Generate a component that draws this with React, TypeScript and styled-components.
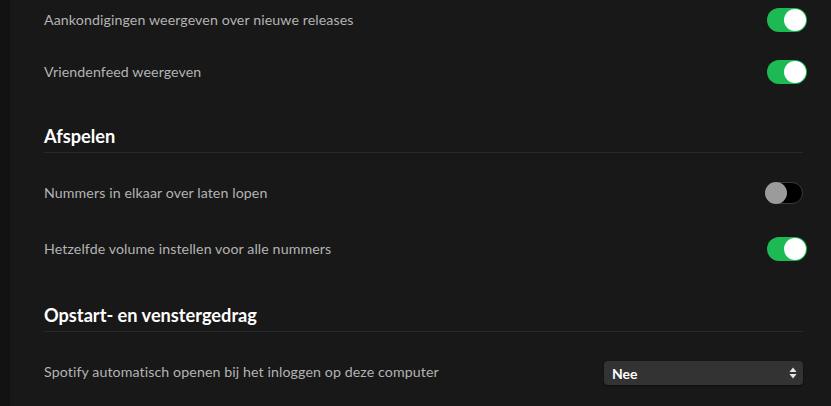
import React from "react";
import styled, { createGlobalStyle } from "styled-components";

const Global = createGlobalStyle`
  html, body { margin: 0; padding: 0; background: #181818; }
  body { width: 831px; height: 406px; overflow: hidden; font-family: Lato, "Noto Sans", Arial, sans-serif; }
  * { box-sizing: border-box; }
`;

const Shell = styled.div`
  display: flex;
  width: 831px;
  height: 406px;
  overflow: hidden;
  background: #181818;
`;

const Gutter = styled.div`
  width: 10px;
  flex: none;
  background: #121212;
`;

const Content = styled.div`
  flex: 1;
  padding: 0 24px 0 34px;
  margin-top: -6px;
`;

const Row = styled.div<{ $h: number }>`
  height: ${(p) => p.$h}px;
  display: flex;
  align-items: center;
  justify-content: space-between;
`;

const Label = styled.span`
  font-size: 14.2px;
  color: #b3b3b3;
  letter-spacing: 0.1px;
  padding-bottom: 1px;
`;

const Heading = styled.h2`
  margin: 0 0 12px;
  padding: 27px 0 5px;
  font-size: 18.2px;
  line-height: 22px;
  font-weight: 700;
  color: #ffffff;
  border-bottom: 1px solid #282828;
  width: 759px;
`;

const Track = styled.div<{ $on: boolean }>`
  position: relative;
  width: ${(p) => (p.$on ? 40 : 38)}px;
  height: ${(p) => (p.$on ? 24 : 22)}px;
  border-radius: 12px;
  margin-right: ${(p) => (p.$on ? 0 : 4)}px;
  background: ${(p) => (p.$on ? "#1db954" : "#000000")};
  border: ${(p) => (p.$on ? "none" : "1px solid #3a3a3a")};
`;

const Thumb = styled.div<{ $on: boolean }>`
  position: absolute;
  top: ${(p) => (p.$on ? 1 : -1)}px;
  ${(p) => (p.$on ? "right: 1px;" : "left: -1px;")}
  width: 22px;
  height: 22px;
  border-radius: 50%;
  background: ${(p) => (p.$on ? "#ffffff" : "#9b9b9b")};
`;

const Toggle = ({ on }: { on: boolean }) => (
  <Track $on={on}>
    <Thumb $on={on} />
  </Track>
);

const Select = styled.div`
  width: 199px;
  height: 24px;
  margin-right: 4px;
  margin-top: 2px;
  border-radius: 4px;
  background: #333333;
  box-shadow: 0 1px 2px rgba(0, 0, 0, 0.5);
  display: flex;
  align-items: center;
  justify-content: space-between;
  padding: 0 6px 0 8px;
  color: #ffffff;
  font-size: 14px;
  font-weight: 700;
`;

const Arrows = () => (
  <svg width="8" height="12" viewBox="0 0 8 12">
    <path d="M4 0.5 L7.5 5 L0.5 5 Z" fill="#e6e6e6" />
    <path d="M4 11.5 L7.5 7 L0.5 7 Z" fill="#e6e6e6" />
  </svg>
);

export default function App() {
  return (
    <Shell>
      <Global />
      <Gutter />
      <Content>
        <Row $h={52}>
          <Label>Aankondigingen weergeven over nieuwe releases</Label>
          <Toggle on />
        </Row>
        <Row $h={52}>
          <Label>Vriendenfeed weergeven</Label>
          <Toggle on />
        </Row>
        <Heading>Afspelen</Heading>
        <Row $h={56}>
          <Label>Nummers in elkaar over laten lopen</Label>
          <Toggle on={false} />
        </Row>
        <Row $h={56}>
          <Label>Hetzelfde volume instellen voor alle nummers</Label>
          <Toggle on />
        </Row>
        <Heading>Opstart- en venstergedrag</Heading>
        <Row $h={56}>
          <Label>Spotify automatisch openen bij het inloggen op deze computer</Label>
          <Select>
            <span>Nee</span>
            <Arrows />
          </Select>
        </Row>
      </Content>
    </Shell>
  );
}
